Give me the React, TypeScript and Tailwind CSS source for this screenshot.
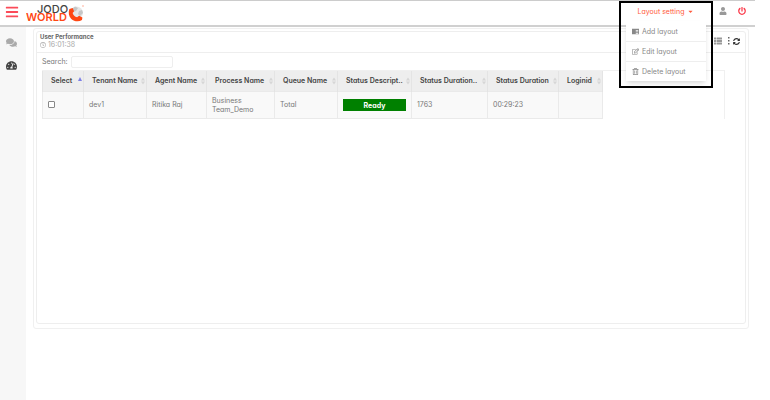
import {
  FaBars,
  FaCaretDown,
  FaComments,
  FaPowerOff,
  FaRegClock,
  FaRegEdit,
  FaRegTrashAlt,
  FaSyncAlt,
  FaTachometerAlt,
  FaThList,
  FaUser,
} from "react-icons/fa";

const columns = [
  { name: "Select", width: "w-[41px]" },
  { name: "Tenant Name", width: "w-[63px]" },
  { name: "Agent Name", width: "w-[60px]" },
  { name: "Process Name", width: "w-[68px]" },
  { name: "Queue Name", width: "w-[63px]" },
  { name: "Status Descript..", width: "w-[74px]" },
  { name: "Status Duration..", width: "w-[76px]" },
  { name: "Status Duration", width: "w-[71px]" },
  { name: "Loginid", width: "w-[44px]" },
];

const rows = [
  {
    tenant: "dev1",
    agent: "Ritika Raj",
    process: "Business Team_Demo",
    queue: "Total",
    status: "Ready",
    seconds: "1763",
    duration: "00:29:23",
    login: "",
  },
];

function LayoutIcon({ size }: { size: number }) {
  return (
    <svg width={size} height={size} viewBox="0 0 14 14" fill="currentColor" aria-hidden="true">
      <path d="M0 1.500h14v11H0zM7.500 4v1.500h5V4zM7.500 7v1.500h5V7zM7.500 10v1.300h5V10z" fillRule="evenodd" />
    </svg>
  );
}

const menuItems = [
  { name: "Add layout", icon: LayoutIcon },
  { name: "Edit layout", icon: FaRegEdit },
  { name: "Delete layout", icon: FaRegTrashAlt },
];

function Logo() {
  return (
    <svg width="60" height="20" viewBox="0 0 60 20" role="img" aria-label="Jodo World">
      <circle cx="50.500" cy="9" r="6.500" fill="#e6e6e6" />
      <path d="M46 5l3-2.500 3 1.500-2 3-3 1zM53 7l3-1 1 3-3 3-2-2z" fill="#c6c6c6" />
      <path
        d="M43.400 5c-1.300 3.300-.7 7.400 1.900 9.900 2.800 2.700 7.400 3.300 10.700 1.200l.4-2.600-3.300-1.700-2 1.500c-2.300-.7-3.900-2.200-4.500-4.400l1.500-1.700-1.500-3.200z"
        fill="#ff4713"
      />
      <circle cx="57" cy="2" r="0.800" fill="#ffa58c" />
      <text x="11" y="9" className="fill-[#444] font-['Inter',sans-serif] text-[11px] font-medium">
        JODO
      </text>
      <text x="0" y="17" className="fill-[#ff4713] font-['Inter',sans-serif] text-[11px] font-semibold">
        WORLD
      </text>
    </svg>
  );
}

function SortIcon({ active }: { active: boolean }) {
  return active ? (
    <svg width="4" height="8" viewBox="0 0 4 8" className="shrink-0" aria-hidden="true">
      <path d="M0 4l2-4 2 4z" fill="#7d80e6" />
    </svg>
  ) : (
    <svg width="4" height="8" viewBox="0 0 4 8" className="shrink-0" aria-hidden="true">
      <path d="M0 3.500l2-3 2 3zM0 4.500l2 3 2-3z" fill="#d6d6d6" />
    </svg>
  );
}

function LayoutMenu() {
  return (
    <div className="relative z-10 flex h-5 w-[94px] items-center justify-center">
      <button className="flex items-center gap-[3px] text-[#ff5a3c]" aria-expanded="true">
        Layout setting
        <FaCaretDown size={7} />
      </button>
      <div className="pointer-events-none absolute top-0 left-0 w-full border-2 border-black px-[5px] pt-[18px] pb-[5px]">
        <ul className="pointer-events-auto bg-white text-[#888] shadow-md">
          {menuItems.map((item) => (
            <li key={item.name} className="border-t border-[#eee] first:border-transparent">
              <button className="flex h-[19px] w-full items-center gap-[3px] px-[6px]">
                <item.icon size={7} />
                {item.name}
              </button>
            </li>
          ))}
        </ul>
      </div>
    </div>
  );
}

function Header() {
  return (
    <header className="flex h-[27px] items-start border-t border-b-2 border-t-[#ccc] border-b-[#d0d0d0] bg-white">
      <button className="mt-1 ml-[5px] text-[#fb4b59]" aria-label="Toggle menu">
        <FaBars size={14} />
      </button>
      <a href="#" className="mt-[3px] ml-[7px]">
        <Logo />
      </a>
      <div className="ml-auto">
        <LayoutMenu />
      </div>
      <button className="mt-[6px] ml-[6px] text-[#999]" aria-label="Account">
        <FaUser size={8} />
      </button>
      <button className="mt-[6px] mr-[9px] ml-[11px] text-[#fb3b4b]" aria-label="Log out">
        <FaPowerOff size={8} />
      </button>
    </header>
  );
}

function Sidebar() {
  return (
    <nav className="flex w-[26px] shrink-0 flex-col items-center gap-3 bg-[#f7f7f7] pt-[10px] pr-[3px]">
      <a href="#" className="text-[#aaa]" aria-label="Chats">
        <FaComments size={11} />
      </a>
      <a href="#" className="text-[#444]" aria-label="Dashboard">
        <FaTachometerAlt size={11} />
      </a>
    </nav>
  );
}

function PerformanceTable() {
  return (
    <div className="mr-5 ml-[5px] border-t border-r border-[#f0f0f0]">
      <table className="w-[560px] table-fixed border-collapse text-left">
        <thead className="bg-[#eee] text-[#444]">
          <tr className="h-5">
            {columns.map((column, i) => (
              <th key={column.name} className={`${column.width} border-x border-[#e4e4e4] p-0 pr-px pl-2 font-semibold`}>
                <span className="flex items-center justify-between whitespace-nowrap">
                  {column.name}
                  <SortIcon active={i === 0} />
                </span>
              </th>
            ))}
          </tr>
        </thead>
        <tbody className="bg-[#f9f9f9] text-[#777]">
          {rows.map((row) => (
            <tr key={row.tenant} className="h-[27px] *:border *:border-[#eaeaea] *:px-[5px] *:py-0">
              <td>
                <input
                  type="checkbox"
                  aria-label="Select row"
                  className="block size-[7px] appearance-none rounded-[1px] border border-[#888] bg-white"
                />
              </td>
              <td>{row.tenant}</td>
              <td>{row.agent}</td>
              <td>{row.process}</td>
              <td>{row.queue}</td>
              <td>
                <span className="block h-3 bg-[#008000] text-center leading-[13px] font-bold text-white">{row.status}</span>
              </td>
              <td>{row.seconds}</td>
              <td>{row.duration}</td>
              <td>{row.login}</td>
            </tr>
          ))}
        </tbody>
      </table>
    </div>
  );
}

function Panel() {
  return (
    <section className="min-h-[293px] rounded-[3px] border border-[#eee]">
      <div className="flex h-[21px] items-center justify-between border-b border-[#eee] pr-[5px] pl-[3px]">
        <div className="pb-0.5 leading-[8px]">
          <h1 className="text-[6px] font-bold text-[#666]">User Performance</h1>
          <p className="flex items-center gap-0.5 text-[#aaa]">
            <FaRegClock size={6} />
            16:01:38
          </p>
        </div>
        <div className="flex items-center pb-0.5">
          <button aria-label="List view" className="text-[#999]">
            <FaThList size={8} />
          </button>
          <button aria-label="More" className="ml-[6px] text-[#666]">
            <svg width="2" height="8" viewBox="0 0 2 8" fill="currentColor" aria-hidden="true">
              <path d="M0 0h1.500v1.500H0zM0 3h1.500v1.500H0zM0 6h1.500v1.500H0z" />
            </svg>
          </button>
          <button aria-label="Refresh" className="ml-[3px] text-[#333]">
            <FaSyncAlt size={7} />
          </button>
        </div>
      </div>
      <div className="flex h-[17px] items-center gap-[3px] pl-[5px] text-[#777]">
        <label htmlFor="search">Search:</label>
        <input id="search" className="h-3 w-[102px] rounded-[2px] border border-[#eee] px-1 outline-none" />
      </div>
      <PerformanceTable />
    </section>
  );
}

export default function App() {
  return (
    <div className="flex min-h-screen flex-col bg-white pr-[15px] font-['Inter','Liberation_Sans',sans-serif] text-[7px] leading-[9px] [font-feature-settings:'cv11']">
      <Header />
      <div className="flex grow">
        <Sidebar />
        <main className="min-w-0 grow pt-px pr-[6px] pl-[7px]">
          <div className="rounded-[3px] border border-[#f0f0f0] px-[2px] pt-[2px] pb-[4px]">
            <Panel />
          </div>
        </main>
      </div>
    </div>
  );
}
